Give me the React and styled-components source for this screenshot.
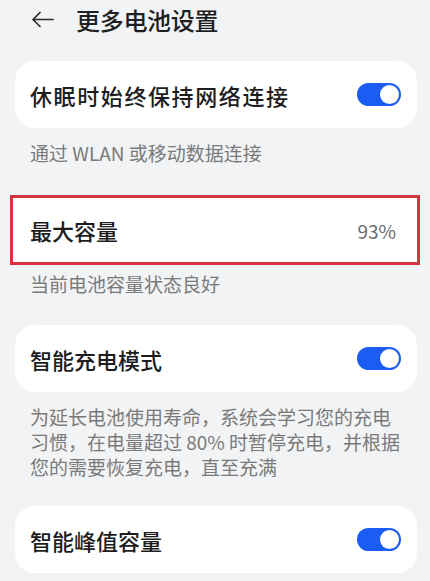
import React from "react";
import styled, { createGlobalStyle } from "styled-components";

const GlobalStyle = createGlobalStyle`
  html, body {
    margin: 0;
    padding: 0;
    background: #f1f3f5;
  }
  body {
    font-family: "Noto Sans CJK SC", "Noto Sans", sans-serif;
    color: #1d1d1d;
  }
`;

const Page = styled.div`
  width: 430px;
  min-height: 581px;
  box-sizing: border-box;
  padding: 0 13px 0 15px;
  background: #f1f3f5;
`;

const Header = styled.div`
  display: flex;
  align-items: center;
  height: 38px;
  margin-bottom: 23px;
`;

const BackButton = styled.div`
  display: flex;
  align-items: center;
  margin-left: 16px;
  margin-right: 22px;
  svg {
    display: block;
  }
`;

const Title = styled.h1`
  margin: 0;
  font-size: 24px;
  font-weight: 500;
  letter-spacing: -0.3px;
  color: #1f1f1f;
`;

const Section = styled.div`
  margin-bottom: ${({ mb = "30px" }) => mb};
`;

const Card = styled.div`
  display: flex;
  align-items: center;
  justify-content: space-between;
  height: ${({ highlighted }) => (highlighted ? "64px" : "67px")};
  background: #fff;
  box-sizing: content-box;
  border-radius: ${({ highlighted }) => (highlighted ? "0" : "20px")};
  border: ${({ highlighted }) => (highlighted ? "3px solid #d7353d" : "none")};
  margin: ${({ highlighted }) => (highlighted ? "0 -3px 0 -5px" : "0")};
  padding: ${({ highlighted }) => (highlighted ? "0 21px 0 17px" : "0 16px 0 15px")};
`;

const ItemTitle = styled.span`
  font-size: 22px;
  font-weight: 500;
  letter-spacing: ${({ spacing = "0" }) => spacing};
  color: #1d1d1d;
`;

const Value = styled.span`
  font-size: 19px;
  color: #6b6b6b;
`;

const Caption = styled.p`
  margin: ${({ mt = "12px" }) => mt} 0 0;
  padding: 0 15px;
  font-size: 19px;
  line-height: 25px;
  color: #7a7a7a;
`;

const Track = styled.div`
  position: relative;
  width: 44px;
  height: 23px;
  border-radius: 12px;
  background: ${({ on }) => (on ? "#1b5df3" : "#c9c9c9")};
  flex-shrink: 0;
`;

const Knob = styled.div`
  position: absolute;
  top: 2px;
  left: ${({ on }) => (on ? "23px" : "2px")};
  width: 19px;
  height: 19px;
  border-radius: 50%;
  background: #fff;
`;

const Switch = ({ on = true }) => (
  <Track on={on ? 1 : 0}>
    <Knob on={on ? 1 : 0} />
  </Track>
);

const BackArrow = () => (
  <svg width="23" height="17" viewBox="0 0 23 17" fill="none">
    <path
      d="M22 8.5H2M9 1.5L2 8.5L9 15.5"
      stroke="#2a2a2a"
      strokeWidth="1.7"
      strokeLinecap="round"
      strokeLinejoin="round"
    />
  </svg>
);

const App = () => {
  return (
    <>
      <GlobalStyle />
      <Page>
        <Header>
          <BackButton>
            <BackArrow />
          </BackButton>
          <Title>更多电池设置</Title>
        </Header>

        <Section mb="30px">
          <Card>
            <ItemTitle spacing="1.6px">休眠时始终保持网络连接</ItemTitle>
            <Switch on />
          </Card>
          <Caption>通过 WLAN 或移动数据连接</Caption>
        </Section>

        <Section mb="29px">
          <Card highlighted>
            <ItemTitle>最大容量</ItemTitle>
            <Value>93%</Value>
          </Card>
          <Caption mt="6px">当前电池容量状态良好</Caption>
        </Section>

        <Section mb="27px">
          <Card>
            <ItemTitle>智能充电模式</ItemTitle>
            <Switch on />
          </Card>
          <Caption>
            为延长电池使用寿命，系统会学习您的充电习惯，在电量超过 80% 时暂停充电，并根据您的需要恢复充电，直至充满
          </Caption>
        </Section>

        <Section mb="0">
          <Card>
            <ItemTitle>智能峰值容量</ItemTitle>
            <Switch on />
          </Card>
        </Section>
      </Page>
    </>
  );
};

export default App;
